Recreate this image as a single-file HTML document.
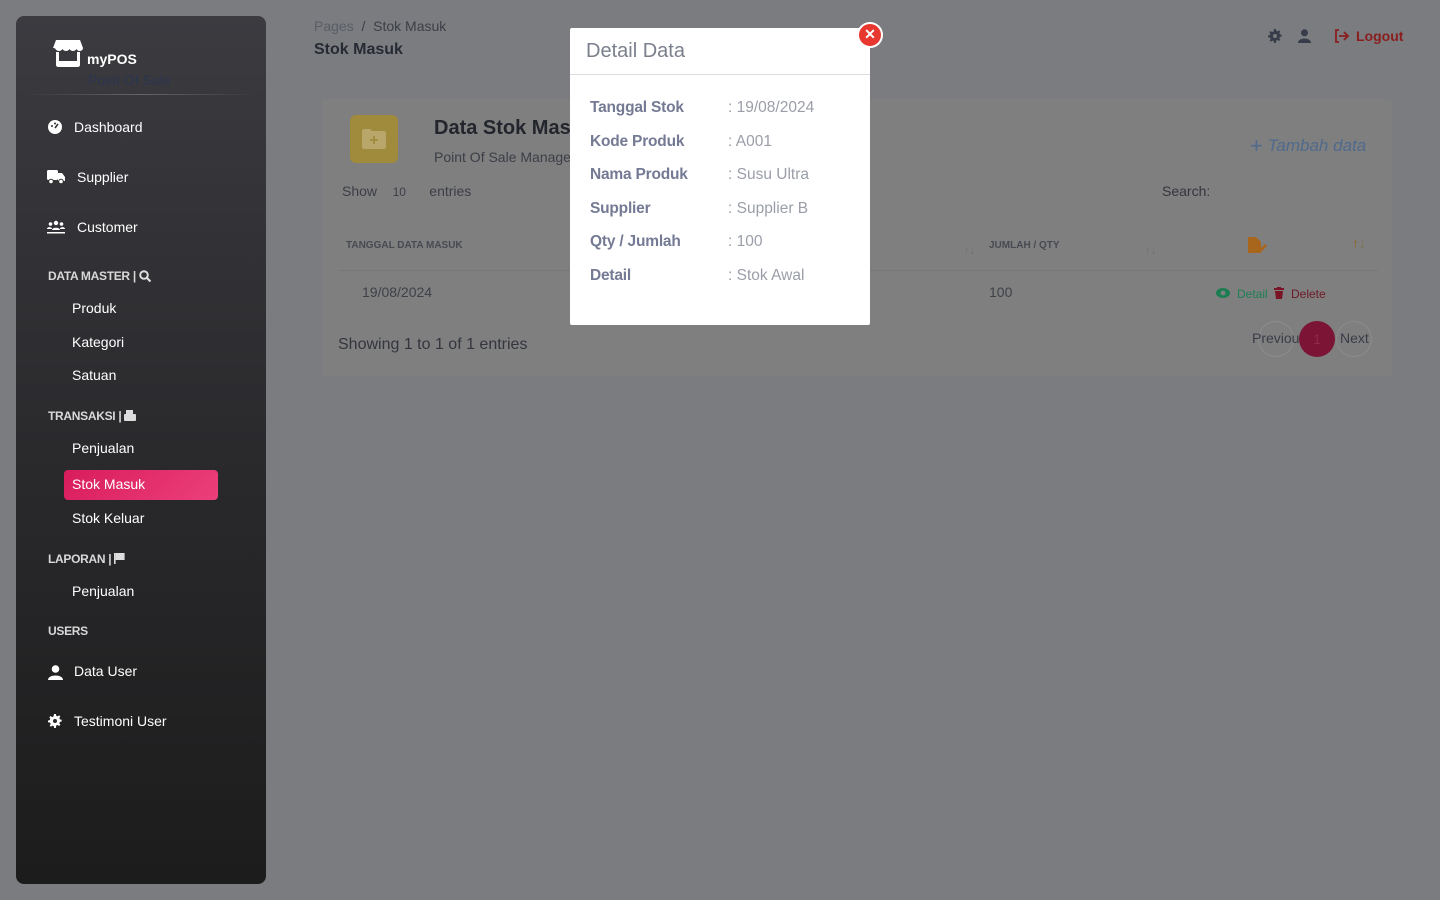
<!DOCTYPE html>
<html><head><meta charset="utf-8"><style>
*{box-sizing:border-box;margin:0;padding:0}
body{width:1440px;height:900px;overflow:hidden;background:#7b7c7f;font-family:"Liberation Sans",Arial,sans-serif;position:relative}
.sb{position:absolute;left:16px;top:16px;width:250px;height:868px;border-radius:8px;background:linear-gradient(180deg,#3b3b40 0%,#2a2a2d 50%,#1c1c1c 100%)}
.t{position:absolute;color:#fff;font-size:14px;white-space:nowrap}
.h{position:absolute;color:#d8d8d8;font-size:12px;font-weight:bold;white-space:nowrap;letter-spacing:-.3px}
.abs{position:absolute;white-space:nowrap}
.card{position:absolute;left:322px;top:99px;width:1070px;height:277px;background:#7f7f7f;border-radius:4px}
.modal{position:absolute;left:570px;top:28px;width:300px;height:297px;background:#fff;border-radius:2px}
.lbl{position:absolute;left:20px;font-size:15.5px;font-weight:bold;color:#747a94;letter-spacing:-.2px}
.val{position:absolute;left:158px;font-size:15.5px;color:#9a9ea8}
</style></head><body>
<svg width="0" height="0" style="position:absolute"><defs><g id="gear"><path d="M7 0h2l.4 2 1.6.7 1.7-1.2 1.4 1.4-1.2 1.7.7 1.6 2 .4v2l-2 .4-.7 1.6 1.2 1.7-1.4 1.4-1.7-1.2-1.6.7L9 16H7l-.4-2-1.6-.7-1.7 1.2-1.4-1.4 1.2-1.7L2.4 9.8 0 9.4v-2l2-.4.7-1.6L1.5 3.7l1.4-1.4 1.7 1.2L6.2 2.8z"/></g></defs></svg>
<div class="sb">
 <svg class="abs" style="left:37px;top:23px" width="30" height="28" viewBox="0 0 30 28"><path d="M3 1h24l3 8c0 2-2 3-3.5 3S24 11 23.5 10c-.5 1-2 2-3.5 2s-3-1-3.5-2c-.5 1-2 2-3.5 2S10 11 9.5 10C9 11 7.5 12 6 12S3 11 2.5 10 0 9 0 9z" fill="#fff"/><path d="M3 13v13c0 1 1 2 2 2h20c1 0 2-1 2-2V13h-3v9H6v-9z" fill="#fff"/></svg>
 <div class="t" style="left:71px;top:35px;font-weight:bold;font-size:14px">myPOS</div>
 <div class="t" style="left:72px;top:56px;color:#2c3550;font-size:14px">Point Of Sale</div>
 <div class="abs" style="left:8px;top:78px;width:234px;height:1px;background:linear-gradient(90deg,transparent,#666,transparent)"></div>
 <svg class="abs" style="left:32px;top:104px" width="14" height="14"><circle cx="7" cy="7" r="7" fill="#fff"/><path d="M7 8l3-4" stroke="#333" stroke-width="1.6"/><circle cx="4" cy="6" r="1" fill="#333"/><circle cx="7" cy="3.5" r="1" fill="#333"/></svg>
 <div class="t" style="left:58px;top:103px">Dashboard</div>
 <svg class="abs" style="left:31px;top:154px" width="18" height="14"><rect x="0" y="0" width="11" height="10" rx="1.5" fill="#fff"/><path d="M11 3h4l3 4v4H11z" fill="#fff"/><circle cx="4" cy="11.5" r="2.3" fill="#fff" stroke="#333"/><circle cx="14" cy="11.5" r="2.3" fill="#fff" stroke="#333"/></svg>
 <div class="t" style="left:61px;top:153px">Supplier</div>
 <svg class="abs" style="left:31px;top:204px" width="18" height="14"><circle cx="9" cy="3" r="2.2" fill="#fff"/><circle cx="3.5" cy="4" r="1.8" fill="#fff"/><circle cx="14.5" cy="4" r="1.8" fill="#fff"/><path d="M5 10c0-3 8-3 8 0zM0 9c0-2.5 5-2.5 5 0zM13 9c0-2.5 5-2.5 5 0z" fill="#fff"/><rect y="12" width="18" height="1.5" fill="#fff"/></svg>
 <div class="t" style="left:61px;top:203px">Customer</div>
 <div class="h" style="left:32px;top:253px">DATA MASTER | <svg width="12" height="12" style="vertical-align:-2px"><circle cx="5" cy="5" r="3.8" fill="none" stroke="#ddd" stroke-width="2"/><path d="M8 8l3.5 3.5" stroke="#ddd" stroke-width="2.2"/></svg></div>
 <div class="t" style="left:56px;top:284px">Produk</div>
 <div class="t" style="left:56px;top:318px">Kategori</div>
 <div class="t" style="left:56px;top:351px">Satuan</div>
 <div class="h" style="left:32px;top:393px">TRANSAKSI | <svg width="12" height="11" style="vertical-align:-1px"><rect x="2" y="0" width="7" height="4" fill="#ddd"/><rect x="0" y="4" width="12" height="7" rx="1" fill="#ddd"/></svg></div>
 <div class="t" style="left:56px;top:424px">Penjualan</div>
 <div class="abs" style="left:48px;top:454px;width:154px;height:30px;border-radius:4px;background:linear-gradient(135deg,#d91c5c,#ec407a)"></div>
 <div class="t" style="left:56px;top:460px">Stok Masuk</div>
 <div class="t" style="left:56px;top:494px">Stok Keluar</div>
 <div class="h" style="left:32px;top:536px">LAPORAN | <svg width="11" height="11" style="vertical-align:-1px"><rect x="0" y="0" width="1.6" height="11" fill="#ddd"/><path d="M1.6 0h9v7h-9z" fill="#ddd"/></svg></div>
 <div class="t" style="left:56px;top:567px">Penjualan</div>
 <div class="h" style="left:32px;top:608px">USERS</div>
 <svg class="abs" style="left:32px;top:649px" width="15" height="15"><circle cx="7.5" cy="4" r="3.8" fill="#fff"/><path d="M0 15c0-6 15-6 15 0z" fill="#fff"/></svg>
 <div class="t" style="left:58px;top:647px">Data User</div>
 <svg class="abs" style="left:32px;top:698px" width="14" height="14" viewBox="0 0 16 16"><use href="#gear" fill="#fff"/><circle cx="8" cy="8" r="2.3" fill="#2a2a2d"/></svg>
 <div class="t" style="left:58px;top:697px">Testimoni User</div>
</div>

<div class="abs" style="left:314px;top:18px;font-size:14px;color:#5a5d66">Pages <span style="color:#3c3f47">&nbsp;/&nbsp; Stok Masuk</span></div>
<div class="abs" style="left:314px;top:41px;font-size:16px;font-weight:bold;color:#262a33">Stok Masuk</div>
<svg class="abs" style="left:1268px;top:29px" width="14" height="14" viewBox="0 0 16 16"><use href="#gear" fill="#363c4a"/><circle cx="8" cy="8" r="2.3" fill="#7b7c7f"/></svg>
<svg class="abs" style="left:1298px;top:29px" width="13" height="14"><circle cx="6.5" cy="3.8" r="3.5" fill="#363c4a"/><path d="M0 14c0-6 13-6 13 0z" fill="#363c4a"/></svg>
<svg class="abs" style="left:1334px;top:29px" width="16" height="14"><path d="M5 1H2v12h3" stroke="#8a1e1e" stroke-width="1.8" fill="none"/><path d="M5 7h9M10 3l4 4-4 4" stroke="#8a1e1e" stroke-width="1.8" fill="none"/></svg>
<div class="abs" style="left:1356px;top:28px;font-size:14px;font-weight:bold;color:#8a1e1e">Logout</div>

<div class="card">
 <div class="abs" style="left:28px;top:16px;width:48px;height:48px;border-radius:6px;background:#a08a3c"></div>
 <svg class="abs" style="left:40px;top:30px" width="24" height="20"><path d="M0 2c0-1 1-2 2-2h6l2 2h12c1 0 2 1 2 2v14c0 1-1 2-2 2H2c-1 0-2-1-2-2z" fill="#b8a66a"/><path d="M12 7v8M8 11h8" stroke="#a08a3c" stroke-width="1.8"/></svg>
 <div class="abs" style="left:112px;top:18px;font-size:20px;font-weight:bold;color:#22252c">Data Stok Masuk</div>
 <div class="abs" style="left:112px;top:50px;font-size:14px;color:#3b3e46">Point Of Sale Management</div>
 <div class="abs" style="left:928px;top:34px;font-size:17px;font-style:italic;color:#4f6a8c"><span style="font-style:normal;font-size:22px;vertical-align:-2px">+</span> Tambah data</div>
 <div class="abs" style="left:20px;top:84px;font-size:14px;color:#3b3e46">Show &nbsp;&nbsp;&nbsp;<span style="font-size:12px">10</span>&nbsp;&nbsp;&nbsp;&nbsp;&nbsp; entries</div>
 <div class="abs" style="left:840px;top:84px;font-size:14px;color:#33363d">Search:</div>
 <div class="abs" style="left:24px;top:141px;font-size:10px;font-weight:bold;color:#474a52">TANGGAL DATA MASUK</div>
 <div class="abs" style="left:667px;top:141px;font-size:10px;font-weight:bold;color:#474a52">JUMLAH / QTY</div>
 <div class="abs" style="left:642px;top:146px;font-size:11px;color:#707070">&#8593;&#8595;</div>
 <div class="abs" style="left:823px;top:146px;font-size:11px;color:#707070">&#8593;&#8595;</div>
 <svg class="abs" style="left:926px;top:138px" width="20" height="17"><path d="M0 1c0-1 1-1 1-1h7l5 5v11H1c-1 0-1-1-1-1z" fill="#a8661c"/><path d="M10 14l7-7 2 2-7 7h-2z" fill="#a8661c"/></svg>
 <div class="abs" style="left:1030px;top:136px;font-size:14px;color:#8a6a2a">&#8593;<span style="color:#7e7050">&#8595;</span></div>
 <div class="abs" style="left:16px;top:171px;width:1040px;height:1px;background:#777"></div>
 <div class="abs" style="left:40px;top:185px;font-size:14px;color:#3e4148">19/08/2024</div>
 <div class="abs" style="left:667px;top:185px;font-size:14px;color:#3e4148">100</div>
 <svg class="abs" style="left:894px;top:189px" width="14" height="10"><ellipse cx="7" cy="5" rx="7" ry="5" fill="#1b7d52"/><circle cx="7" cy="5" r="2.4" fill="#808080"/></svg>
 <div class="abs" style="left:915px;top:188px;font-size:12px;color:#1e7e55">Detail</div>
 <svg class="abs" style="left:952px;top:188px" width="10" height="12"><rect x="0" y="1" width="10" height="2" fill="#7a1424"/><rect x="3" y="0" width="4" height="2" fill="#7a1424"/><path d="M1 4h8l-1 8H2z" fill="#7a1424"/></svg>
 <div class="abs" style="left:969px;top:188px;font-size:12px;color:#6e1a26">Delete</div>
 <div class="abs" style="left:16px;top:237px;font-size:16px;color:#33363d">Showing 1 to 1 of 1 entries</div>
 <div class="abs" style="left:936px;top:222px;width:36px;height:36px;border-radius:50%;border:1px solid #8c8c8c"></div>
 <div class="abs" style="left:1014px;top:222px;width:36px;height:36px;border-radius:50%;border:1px solid #8c8c8c"></div>
 <div class="abs" style="left:930px;top:231px;font-size:14px;color:#3a3d48">Previou</div>
 <div class="abs" style="left:977px;top:222px;width:36px;height:36px;border-radius:50%;background:#7c1436;color:#902a4c;font-size:14px;text-align:center;line-height:36px">1</div>
 <div class="abs" style="left:1018px;top:231px;font-size:14px;color:#3a3d48">Next</div>
</div>

<div class="modal">
 <div class="abs" style="left:16px;top:12px;font-size:20px;color:#7a7f8c">Detail Data</div>
 <div class="abs" style="left:0;top:46px;width:300px;height:1px;background:#dcdcdc"></div>
 <div class="lbl" style="top:71px">Tanggal Stok</div><div class="val" style="top:71px">: 19/08/2024</div>
 <div class="lbl" style="top:105px">Kode Produk</div><div class="val" style="top:105px">: A001</div>
 <div class="lbl" style="top:138px">Nama Produk</div><div class="val" style="top:138px">: Susu Ultra</div>
 <div class="lbl" style="top:172px">Supplier</div><div class="val" style="top:172px">: Supplier B</div>
 <div class="lbl" style="top:205px">Qty / Jumlah</div><div class="val" style="top:205px">: 100</div>
 <div class="lbl" style="top:239px">Detail</div><div class="val" style="top:239px">: Stok Awal</div>
</div>
<div class="abs" style="left:857px;top:22px;width:26px;height:26px;border-radius:50%;background:#e8372f;border:2px solid #fff;color:#fff;font-size:14px;font-weight:bold;text-align:center;line-height:21px">&#x2715;</div>
</body></html>
